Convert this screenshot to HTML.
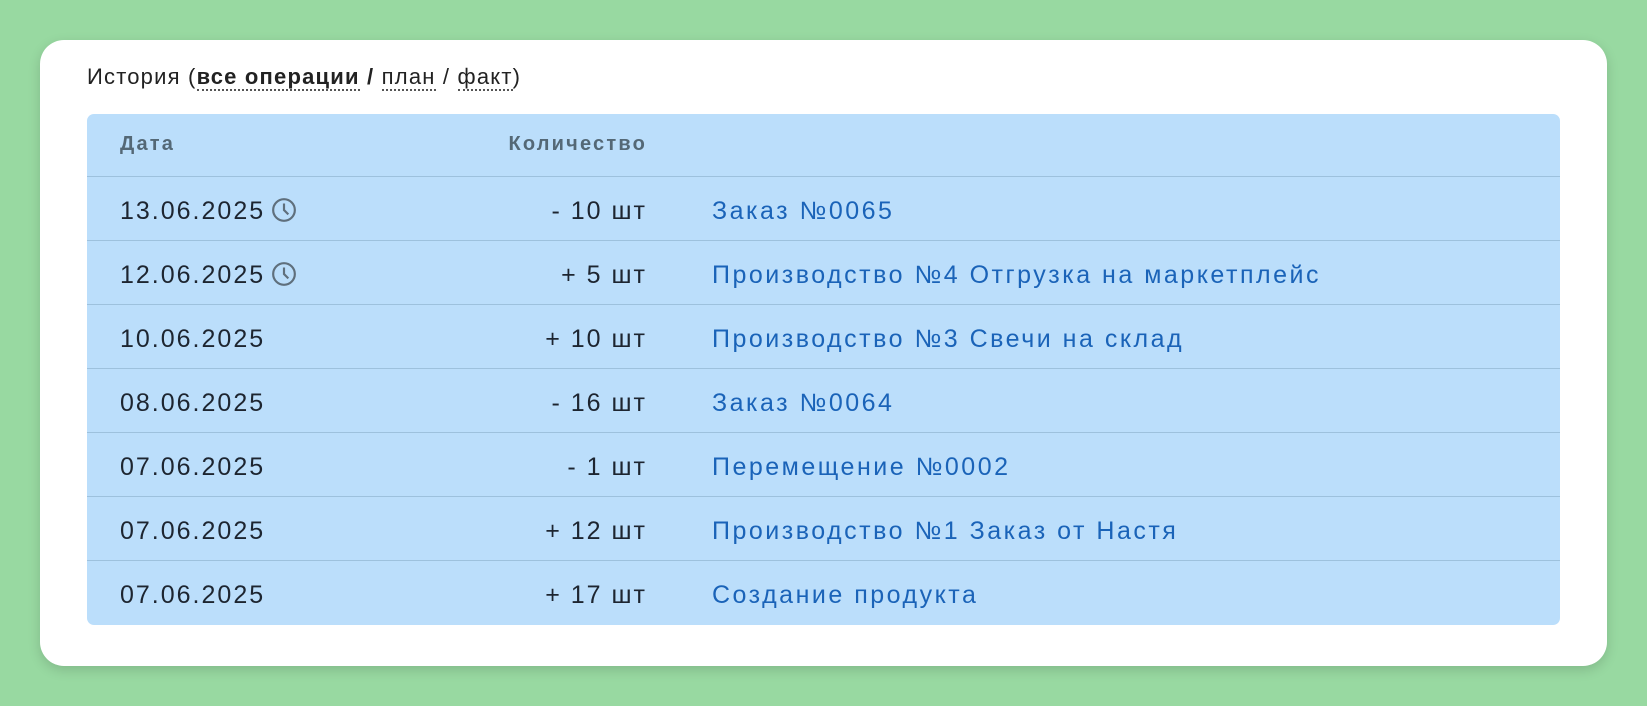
<!DOCTYPE html>
<html><head><meta charset="utf-8"><style>
body{margin:0;width:1647px;height:706px;background:#98d9a1;font-family:"Liberation Sans",sans-serif;overflow:hidden}
.card{position:absolute;left:40px;top:40px;width:1567px;height:626px;background:#fff;border-radius:24px;box-shadow:0 4px 12px rgba(0,0,0,.15)}
.title{position:absolute;left:47px;top:24px;font-size:22px;color:#222;letter-spacing:1.2px}
.title span{border-bottom:2px dotted #555}
.tbl{position:absolute;left:47px;top:74px;width:1473px;height:511px;background:#bbdefb;border-radius:7px;overflow:hidden}
.row{position:relative;height:64px;border-bottom:1.5px solid #9dc1dd;box-sizing:border-box}
.row.h{height:63px}
.row:last-child{border-bottom:none}
.d,.q,.l{position:absolute;top:2px;line-height:64px;font-size:25px;color:#1d2530;letter-spacing:2px}
.d{left:33px}.q{right:913px;text-align:right}.l{left:625px;color:#1a63b8;letter-spacing:2.5px}
.h .d,.h .q{top:0;font-size:20px;font-weight:bold;color:#546876;line-height:61px;letter-spacing:2.2px}
.clk{display:inline-block;vertical-align:-4px;margin-left:6px}
</style></head><body>
<div class="card">
<div class="title">История (<span><b>все операции</b></span> <b>/</b> <span>план</span> / <span>факт</span>)</div>
<div class="tbl">
<div class="row h"><div class="d">Дата</div><div class="q">Количество</div></div>
<div class="row"><div class="d">13.06.2025<svg class="clk" width="26" height="26" viewBox="0 0 24 24"><circle cx="12" cy="12" r="10" fill="none" stroke="#5f6f7c" stroke-width="2"/><path d="M12 6v6l4 4" fill="none" stroke="#5f6f7c" stroke-width="2"/></svg></div><div class="q">- 10 шт</div><div class="l">Заказ №0065</div></div>
<div class="row"><div class="d">12.06.2025<svg class="clk" width="26" height="26" viewBox="0 0 24 24"><circle cx="12" cy="12" r="10" fill="none" stroke="#5f6f7c" stroke-width="2"/><path d="M12 6v6l4 4" fill="none" stroke="#5f6f7c" stroke-width="2"/></svg></div><div class="q">+ 5 шт</div><div class="l">Производство №4 Отгрузка на маркетплейс</div></div>
<div class="row"><div class="d">10.06.2025</div><div class="q">+ 10 шт</div><div class="l">Производство №3 Свечи на склад</div></div>
<div class="row"><div class="d">08.06.2025</div><div class="q">- 16 шт</div><div class="l">Заказ №0064</div></div>
<div class="row"><div class="d">07.06.2025</div><div class="q">- 1 шт</div><div class="l">Перемещение №0002</div></div>
<div class="row"><div class="d">07.06.2025</div><div class="q">+ 12 шт</div><div class="l">Производство №1 Заказ от Настя</div></div>
<div class="row"><div class="d">07.06.2025</div><div class="q">+ 17 шт</div><div class="l">Создание продукта</div></div>
</div></div>
</body></html>
